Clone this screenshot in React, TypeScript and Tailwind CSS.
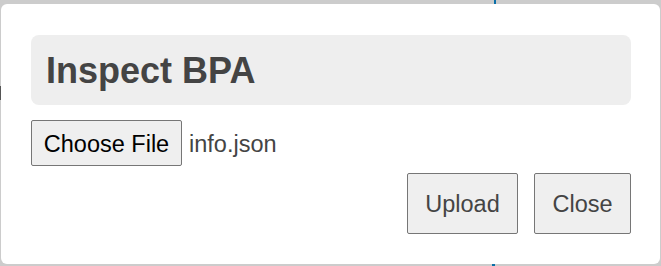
export default function App() {
  return (
    <div className="relative w-[661px] h-[266px] overflow-hidden bg-[#cccccc] pt-[4px] pl-[1px] font-['Liberation_Sans',Arial,sans-serif]">
      {/* bits of the page behind the overlay */}
      <div className="absolute left-[494px] top-0 w-[2px] h-[4px] bg-[#0a6fa8]" />
      <div className="absolute left-[492px] bottom-0 w-[3px] h-[2px] bg-[#0a6fa8]" />
      <div className="absolute left-0 top-[86px] w-[1px] h-[14px] bg-[#555]" />

      {/* modal */}
      <div className="relative w-[659px] h-[260px] bg-white rounded-[6px] pt-[31px] pl-[30px] pr-[29px]">
        <div className="h-[70px] bg-[#eeeeee] rounded-[8px] flex items-center pl-[15px] pt-[1px]">
          <h2 className="text-[36px] font-bold text-[#444444] leading-none">Inspect BPA</h2>
        </div>

        <div className="mt-[15px] flex items-center gap-[7px]">
          <button className="w-[151px] h-[46px] pt-[3px] bg-[#efefef] border border-[#767676] rounded-[2px] text-[23.5px] text-black leading-none">
            Choose File
          </button>
          <span className="pt-[3px] text-[23.5px] text-[#444444] leading-none">info.json</span>
        </div>

        <div className="mt-[7px] flex justify-end gap-[16px]">
          <button className="w-[111px] h-[61px] pt-[3px] bg-[#efefef] border border-[#767676] rounded-[2px] text-[23.5px] text-[#444444] leading-none">
            Upload
          </button>
          <button className="w-[97px] h-[61px] pt-[3px] bg-[#efefef] border border-[#767676] rounded-[2px] text-[23.5px] text-[#444444] leading-none">
            Close
          </button>
        </div>
      </div>
    </div>
  );
}
